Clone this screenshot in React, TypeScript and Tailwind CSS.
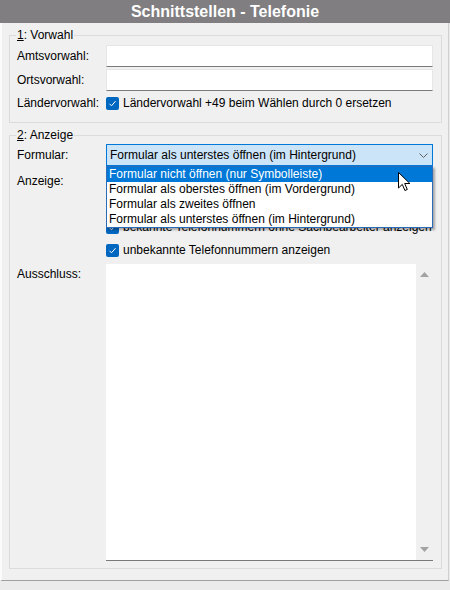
import React from 'react';

const CheckBox: React.FC = () => (
  <span className="w-[13px] h-[13px] rounded-[2px] bg-[#0067c0] flex items-center justify-center shrink-0">
    <svg className="w-[9px] h-[9px]" viewBox="0 0 9 9" fill="none">
      <path d="M1.5 4.8l2 2 4-4.6" stroke="white" strokeWidth={1} />
    </svg>
  </span>
);

const CheckRow: React.FC<{ label?: string }> = ({ label }) => (
  <div className="h-[23px] flex items-center gap-[4px]">
    <CheckBox />
    {label && <span>{label}</span>}
  </div>
);

const TextBox: React.FC = () => (
  <div className="h-[22px] bg-white border border-[#e6e6e6] border-b-[#7a7a7a]" />
);

const options = [
  'Formular nicht öffnen (nur Symbolleiste)',
  'Formular als oberstes öffnen (im Vordergrund)',
  'Formular als zweites öffnen',
  'Formular als unterstes öffnen (im Hintergrund)',
];

export default function App() {
  return (
    <div className="w-[450px] h-[590px] bg-[#ebebeb] text-[12px] leading-[15px] text-black font-['Segoe_UI','Liberation_Sans',Arial,sans-serif]">
      {/* Title */}
      <div className="h-[23px] bg-[#807e80] text-white font-bold text-[16px] flex items-center justify-center">
        Schnittstellen - Telefonie
      </div>

      {/* Body */}
      <div className="w-[449px] h-[558px] bg-[#f0f0f0] border-l-2 border-l-[#fbfbfb] border-r border-r-[#d0d0d0] border-b border-b-[#a0a0a0] pl-[7px] pr-[6px] pt-[5px] flex flex-col gap-[5px]">
        {/* 1: Vorwahl */}
        <fieldset className="border border-[#dcdcdc] pl-[7px] pr-[8px] pt-[2px] pb-[9px]">
          <legend className="px-[1px] -ml-[1px]">
            <span className="underline">1</span>: Vorwahl
          </legend>
          <div className="grid grid-cols-[89px_1fr] gap-y-[2px] items-center">
            <span>Amtsvorwahl:</span>
            <TextBox />
            <span>Ortsvorwahl:</span>
            <TextBox />
            <span>Ländervorwahl:</span>
            <div className="h-[20px] flex items-center gap-[4px]">
              <CheckBox />
              <span>Ländervorwahl +49 beim Wählen durch 0 ersetzen</span>
            </div>
          </div>
        </fieldset>

        {/* 2: Anzeige */}
        <fieldset className="border border-[#dcdcdc] pl-[7px] pr-[8px] pt-[1px] pb-[7px]">
          <legend className="px-[1px] -ml-[1px]">
            <span className="underline">2</span>: Anzeige
          </legend>
          <div className="grid grid-cols-[89px_1fr] items-start">
            <span className="h-[22px] flex items-center">Formular:</span>
            <div className="relative">
              <div className="h-[22px] bg-[#cce4f7] border border-[#0078d7] flex items-center justify-between pl-[3px] pr-[4px]">
                <span>Formular als unterstes öffnen (im Hintergrund)</span>
                <svg className="w-[9px] h-[5px]" viewBox="0 0 9 5" fill="none">
                  <path d="M0.5 0.5l4 4 4-4" stroke="#606060" strokeWidth={1} />
                </svg>
              </div>
              {/* open dropdown list */}
              <div className="absolute z-10 left-0 top-full w-full bg-white border border-[#2a6cb8] shadow-[2px_2px_2px_rgba(0,0,0,0.3)]">
                {options.map((o, i) => (
                  <div
                    key={o}
                    className={
                      i === 0
                        ? 'h-[15px] leading-[15px] pl-[2px] bg-[#0078d7] text-white'
                        : 'h-[15px] leading-[15px] pl-[2px]'
                    }
                  >
                    {o}
                  </div>
                ))}
              </div>
              {/* mouse cursor */}
              <svg
                className="absolute z-20 left-[292px] top-[28px] w-[13px] h-[20px]"
                viewBox="0 0 13 20"
              >
                <path
                  d="M0.5 0.5v15.5l3.8-3.6 2.6 6.1 2.4-1-2.6-6h5.2z"
                  fill="white"
                  stroke="black"
                  strokeWidth={1}
                  strokeLinejoin="round"
                />
              </svg>
            </div>

            <span className="mt-[4px] h-[23px] flex items-center">Anzeige:</span>
            <div className="mt-[4px]">
              <CheckRow />
              <CheckRow />
              <CheckRow label="bekannte Telefonnummern ohne Sachbearbeiter anzeigen" />
              <CheckRow label="unbekannte Telefonnummern anzeigen" />
            </div>

            <span className="mt-[5px]">Ausschluss:</span>
            <div className="mt-[2px] h-[297px] bg-white border-b border-b-[#7a7a7a] flex justify-end">
              <div className="w-[17px] bg-[#f0f0f0] flex flex-col items-center justify-between py-[8px]">
                <svg className="w-[9px] h-[5px]" viewBox="0 0 9 5">
                  <path d="M0 5L4.5 0 9 5z" fill="#a3a3a3" />
                </svg>
                <svg className="w-[9px] h-[5px]" viewBox="0 0 9 5">
                  <path d="M0 0L4.5 5 9 0z" fill="#a3a3a3" />
                </svg>
              </div>
            </div>
          </div>
        </fieldset>
      </div>
    </div>
  );
}
